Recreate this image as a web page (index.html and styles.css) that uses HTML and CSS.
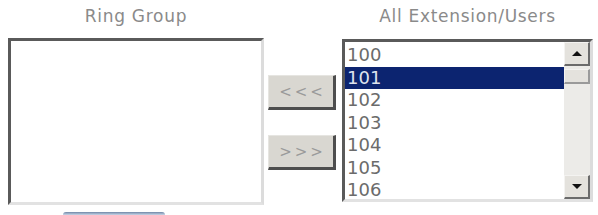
FILE: index.html
```html
<!DOCTYPE html>
<html lang="en">
<head>
    <meta charset="UTF-8">
    <title>Ring Group</title>
    <link rel="stylesheet" href="styles.css">
</head>
<body>
    <div class="picker">
        <!-- Members of the ring group -->
        <div class="column">
            <div class="title">Ring Group</div>
            <div class="listbox group-list"></div>
            <div class="save-button"></div>
        </div>

        <!-- Move buttons -->
        <div class="moves">
            <button class="move">&lt;&lt;&lt;</button>
            <button class="move">&gt;&gt;&gt;</button>
        </div>

        <!-- All extensions -->
        <div class="column">
            <div class="title">All Extension/Users</div>
            <div class="listbox users-list">
                <div class="options">
                    <div class="option">100</div>
                    <div class="option selected">101</div>
                    <div class="option">102</div>
                    <div class="option">103</div>
                    <div class="option">104</div>
                    <div class="option">105</div>
                    <div class="option">106</div>
                </div>
                <div class="scrollbar">
                    <div class="scroll-btn"><span class="arrow up"></span></div>
                    <div class="thumb"></div>
                    <div class="track"></div>
                    <div class="scroll-btn"><span class="arrow down"></span></div>
                </div>
            </div>
        </div>
    </div>
</body>
</html>
```

FILE: styles.css
```css
body {
    margin: 0;
    background-color: #fff;
    font-family: "DejaVu Sans", Verdana, sans-serif;
    overflow: hidden;
}

.picker {
    display: flex;
    align-items: flex-start;
    padding-left: 8px;
}

.column {
    display: flex;
    flex-direction: column;
}

.title {
    height: 33px;
    padding-top: 5px;
    font-size: 17px;
    line-height: 22px;
    letter-spacing: 0.7px;
    color: #8a8a8a;
    text-align: center;
}

/* Рамка списка "вдавленная" как в старой Windows */
.listbox {
    box-sizing: border-box;
    background-color: #fff;
    border-style: solid;
    border-width: 3px;
    border-color: #5a5a5a #dcdcdc #e2e2e2 #5a5a5a;
}

.group-list {
    width: 256px;
    height: 167px;
}

/* Верх кнопки, обрезанной краем окна */
.save-button {
    width: 102px;
    height: 3px;
    margin: 7px 0 0 55px;
    border-radius: 6px 6px 0 0;
    background: linear-gradient(#6f86a6, #c9d6e8);
}

.moves {
    display: flex;
    flex-direction: column;
    width: 68px;
    margin: 75px 6px 0 4px;
    gap: 25px;
}

.move {
    box-sizing: border-box;
    height: 35px;
    width: 68px;
    padding: 0;
    background-color: #d9d7d1;
    border-style: solid;
    border-width: 1px 3px 3px 1px;
    border-color: #e6e5e1 #4e4e4e #4e4e4e #e6e5e1;
    font-family: "DejaVu Sans", Verdana, sans-serif;
    font-size: 15px;
    letter-spacing: 3px;
    text-indent: 3px;
    color: #9a9a9a;
}

.users-list {
    display: flex;
    width: 251px;
    height: 163px;
    margin-top: 1px;
}

.options {
    flex: 1;
    padding-top: 2px;
    overflow: hidden;
}

.option {
    height: 22.5px;
    padding-left: 2px;
    font-size: 18px;
    line-height: 22.5px;
    color: #6b6b6b;
}

.option.selected {
    background-color: #0c2470;
    color: #dfe3ee;
}

/* Нарисованная полоса прокрутки */
.scrollbar {
    display: flex;
    flex-direction: column;
    width: 26px;
    background-color: #ecebe8;
}

.scroll-btn {
    box-sizing: border-box;
    display: flex;
    align-items: center;
    justify-content: center;
    height: 24px;
    background-color: #e4e2dd;
    border-style: solid;
    border-width: 1px 2px 2px 1px;
    border-color: #f4f3f1 #6b6b6b #6b6b6b #f4f3f1;
}

.thumb {
    box-sizing: border-box;
    height: 15px;
    margin-top: 3px;
    background-color: #e4e2dd;
    border-style: solid;
    border-width: 1px 2px 2px 1px;
    border-color: #f4f3f1 #9a9a9a #9a9a9a #f4f3f1;
}

.track {
    flex: 1;
}

.arrow {
    width: 0;
    height: 0;
    border-left: 5px solid transparent;
    border-right: 5px solid transparent;
}

.arrow.up {
    border-bottom: 5px solid #111;
}

.arrow.down {
    border-top: 5px solid #111;
}
```
